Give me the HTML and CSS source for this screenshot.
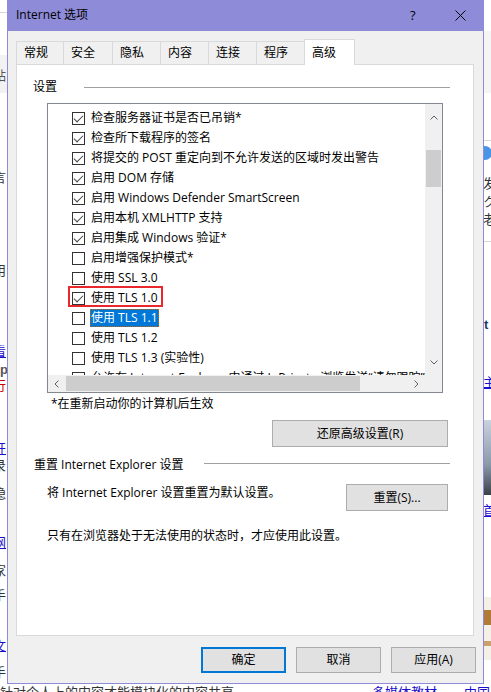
FILE: index.html
```html
<!DOCTYPE html>
<html lang="zh-CN">
<head>
<meta charset="utf-8">
<title>Internet 选项</title>
<link rel="stylesheet" href="styles.css">
</head>
<body>
<div class="backdrop">
  <div class="bg-line bl-top"></div>
  <div class="bg-box lbox"><span class="frag-in">贴</span></div>
  <span class="frag gray f-yan">言</span>
  <span class="frag gray f-yong">用</span>
  <span class="frag link f-kan">看</span>
  <span class="frag bold f-p">p</span>
  <span class="frag red f-xing">行</span>
  <span class="frag link f-kai">开</span>
  <span class="frag gray f-lu">录</span>
  <span class="frag gray f-yin">隐</span>
  <span class="frag link f-wang">网</span>
  <span class="frag gray f-jia">家</span>
  <span class="frag gray f-shou">手</span>
  <span class="frag link f-wen">文</span>
  <span class="frag gray f-shou2">手</span>
  <span class="frag gray f-bottom">针对个人上的内容才能模块化的内容共享</span>
  <span class="frag link f-media">多媒体教材</span>
  <span class="frag link f-china">中国</span>
  <div class="bg-box rbox"></div>
  <div class="bg-line bl-r1"></div>
  <div class="bg-line bl-r2"></div>
  <div class="dot"></div>
  <span class="frag gray f-fa">发</span>
  <span class="frag gray f-ku">ク</span>
  <span class="frag gray f-lao">老</span>
  <span class="frag navy f-t">t</span>
  <span class="frag link f-zhu">主</span>
  <div class="photo"></div>
  <span class="frag link f-shouye">首</span>
  <div class="logo"></div>
</div>

<div class="dialog">
  <div class="titlebar">
    <span class="title">Internet 选项</span>
    <span class="help">?</span>
    <span class="close"><svg width="11" height="11" viewBox="0 0 11 11"><path d="M0.5 0.5 L10.5 10.5 M10.5 0.5 L0.5 10.5" stroke="#000" stroke-width="1" fill="none"/></svg></span>
  </div>

  <div class="tabs">
    <div class="tab w1">常规</div>
    <div class="tab w2">安全</div>
    <div class="tab w3">隐私</div>
    <div class="tab w3">内容</div>
    <div class="tab w3">连接</div>
    <div class="tab w3">程序</div>
    <div class="tab active">高级</div>
  </div>

  <div class="panel">
    <div class="legend"><span>设置</span><span class="rule"></span></div>

    <div class="listbox">
      <div class="items">
        <div class="row"><span class="cb on"></span><span class="lbl">检查服务器证书是否已吊销*</span></div>
        <div class="row"><span class="cb on"></span><span class="lbl">检查所下载程序的签名</span></div>
        <div class="row"><span class="cb on"></span><span class="lbl">将提交的 POST 重定向到不允许发送的区域时发出警告</span></div>
        <div class="row"><span class="cb on"></span><span class="lbl">启用 DOM 存储</span></div>
        <div class="row"><span class="cb on"></span><span class="lbl">启用 Windows Defender SmartScreen</span></div>
        <div class="row"><span class="cb on"></span><span class="lbl">启用本机 XMLHTTP 支持</span></div>
        <div class="row"><span class="cb on"></span><span class="lbl">启用集成 Windows 验证*</span></div>
        <div class="row"><span class="cb"></span><span class="lbl">启用增强保护模式*</span></div>
        <div class="row"><span class="cb"></span><span class="lbl">使用 SSL 3.0</span></div>
        <div class="row"><span class="mark"><span class="cb on"></span><span class="lbl">使用 TLS 1.0</span></span></div>
        <div class="row"><span class="cb"></span><span class="lbl sel">使用 TLS 1.1</span></div>
        <div class="row"><span class="cb"></span><span class="lbl">使用 TLS 1.2</span></div>
        <div class="row"><span class="cb"></span><span class="lbl">使用 TLS 1.3 (实验性)</span></div>
        <div class="row"><span class="cb"></span><span class="lbl">允许在 Internet Explorer 中通过 InPrivate 浏览发送“请勿跟踪”请求*</span></div>
      </div>
      <div class="vscroll">
        <div class="sb-up"><svg width="8" height="5" viewBox="0 0 8 5"><path d="M0.5 4.5 L4 1 L7.5 4.5" stroke="#606060" fill="none"/></svg></div>
        <div class="vthumb"></div>
        <div class="sb-fill"></div>
        <div class="sb-down"><svg width="8" height="5" viewBox="0 0 8 5"><path d="M0.5 0.5 L4 4 L7.5 0.5" stroke="#606060" fill="none"/></svg></div>
      </div>
      <div class="hscroll">
        <div class="sb-side"><svg width="5" height="8" viewBox="0 0 5 8"><path d="M4.5 0.5 L1 4 L4.5 7.5" stroke="#606060" fill="none"/></svg></div>
        <div class="hthumb"></div>
        <div class="sb-fill"></div>
        <div class="sb-side"><svg width="5" height="8" viewBox="0 0 5 8"><path d="M0.5 0.5 L4 4 L0.5 7.5" stroke="#606060" fill="none"/></svg></div>
      </div>
      <div class="corner"></div>
    </div>

    <div class="note">*在重新启动你的计算机后生效</div>

    <div class="btn-row"><div class="btn restore">还原高级设置(R)</div></div>

    <div class="legend section"><span>重置 Internet Explorer 设置</span><span class="rule"></span></div>

    <div class="reset-row">
      <span class="desc">将 Internet Explorer 设置重置为默认设置。</span>
      <div class="btn reset">重置(S)...</div>
    </div>

    <div class="desc warn">只有在浏览器处于无法使用的状态时，才应使用此设置。</div>
  </div>

  <div class="footer">
    <div class="btn foot primary">确定</div>
    <div class="btn foot">取消</div>
    <div class="btn foot">应用(A)</div>
  </div>
</div>
</body>
</html>
```

FILE: styles.css
```css
* { box-sizing: border-box; margin: 0; padding: 0; }

html, body { width: 491px; height: 692px; overflow: hidden; }

body {
  position: relative;
  background: #fff;
  font-family: "Open Sans", "Noto Sans CJK SC", sans-serif;
  font-size: 12px;
  color: #000;
}

/* ---------- page behind the dialog ---------- */
.backdrop { position: absolute; inset: 0; overflow: hidden; }
.frag { position: absolute; font-size: 13px; line-height: 14px; white-space: nowrap; font-family: "Noto Sans CJK SC", sans-serif; }
.gray { color: #333; }
.link { color: #1a0dcc; text-decoration: underline; }
.red { color: #c00; }
.bold { color: #555; font-weight: bold; font-family: "Liberation Sans", sans-serif; }
.navy { color: #1b3a6b; font-weight: bold; font-family: "Liberation Sans", sans-serif; }
.bg-line { position: absolute; height: 1px; background: #d6d6d6; }
.bl-top { left: 0; top: 12px; width: 8px; }
.bg-box { position: absolute; }
.lbox { left: 0; top: 55px; width: 8px; height: 38px; background: #f2f2f2; }
.frag-in { position: absolute; left: -7px; top: 10px; font-size: 13px; color: #555; font-family: "Noto Sans CJK SC", sans-serif; }
.f-yan { left: -7px; top: 170px; }
.f-yong { left: -7px; top: 263px; }
.f-kan { left: -7px; top: 344px; }
.f-p { left: 0; top: 363px; }
.f-xing { left: -7px; top: 378px; }
.f-kai { left: -7px; top: 441px; }
.f-lu { left: -7px; top: 458px; }
.f-yin { left: -7px; top: 486px; }
.f-wang { left: -7px; top: 535px; }
.f-jia { left: -7px; top: 563px; }
.f-shou { left: -7px; top: 588px; }
.f-wen { left: -7px; top: 638px; }
.f-shou2 { left: -7px; top: 665px; }
.f-bottom { left: 0; top: 685px; }
.f-media { left: 372px; top: 685px; }
.f-china { left: 464px; top: 685px; }
.rbox { left: 483px; top: 31px; width: 8px; height: 62px; background: #f5f5f5; }
.bl-r1 { left: 483px; top: 140px; width: 8px; }
.bl-r2 { left: 483px; top: 241px; width: 8px; }
.dot { position: absolute; left: 478px; top: 146px; width: 14px; height: 14px; border-radius: 50%; background: #4a94e6; }
.f-fa { left: 483px; top: 176px; }
.f-ku { left: 483px; top: 194px; }
.f-lao { left: 483px; top: 212px; }
.f-t { left: 484px; top: 318px; }
.f-zhu { left: 483px; top: 375px; }
.photo { position: absolute; left: 483px; top: 420px; width: 8px; height: 75px; background: linear-gradient(#c9d3de, #8a98a8 60%, #3b4048); }
.f-shouye { left: 483px; top: 503px; }
.logo { position: absolute; left: 483px; top: 597px; width: 8px; height: 63px; background: linear-gradient(#f4efe7 0 20%, #b07a3a 20% 45%, #f4efe7 45% 70%, #c9a070 70% 78%, #f4efe7 78%); }

/* ---------- dialog window ---------- */
.dialog {
  position: absolute;
  left: 7px;
  top: 0;
  width: 477px;
  height: 684px;
  background: #f0f0f0;
  border: 1px solid #8e8cd8;
  border-top: none;
}

.titlebar {
  height: 31px;
  margin: 0 -1px;
  background: #8e8cd8;
  display: flex;
  align-items: center;
  padding-left: 9px;
}
.title { line-height: 16px; font-size: 12px; margin-top: -1px; }
.help { margin-left: auto; width: 10px; font-size: 13px; line-height: 16px; margin-top: -1px; }
.close { display: flex; margin-left: 35px; margin-right: 18px; }

/* ---------- tabs ---------- */
.tabs {
  display: flex;
  align-items: flex-end;
  height: 25px;
  margin-top: 8px;
  padding-left: 8px;
  position: relative;
  z-index: 1;
}
.tab {
  height: 23px;
  border: 1px solid #d9d9d9;
  border-bottom: none;
  margin-right: -1px;
  padding: 3px 0 0 7px;
  line-height: 16px;
  background: #f0f0f0;
}
.w1 { width: 48px; }
.w2 { width: 50px; }
.w3 { width: 49px; }
.tab.active {
  width: 51px;
  height: 26px;
  margin-bottom: -1px;
  padding-top: 5px;
  background: #fff;
  position: relative;
  z-index: 2;
}

/* ---------- tab page ---------- */
.panel {
  margin-left: 8px;
  width: 458px;
  height: 572px;
  background: #fff;
  border: 1px solid #d9d9d9;
  padding: 13px 23px 0 16px;
}

.legend { display: flex; align-items: center; height: 18px; line-height: 18px; }
.rule { flex: 1; height: 1px; background: #a0a0a0; margin-left: 27px; }
.legend.section { margin-top: 9px; padding-left: 1px; }
.legend.section .rule { margin-left: 21px; margin-bottom: 4px; }

.listbox {
  margin: 7px 0 0 14px;
  width: 396px;
  height: 290px;
  border: 1px solid #828790;
  background: #fff;
  display: grid;
  grid-template-columns: 1fr 17px;
  grid-template-rows: 1fr 17px;
}
.items { overflow: hidden; padding-top: 4px; }
.row {
  height: 20px;
  display: flex;
  align-items: center;
  padding-left: 24px;
  white-space: nowrap;
}
.cb {
  flex: none;
  width: 13px;
  height: 13px;
  border: 1px solid #333;
  background: #fff;
  margin-right: 5px;
  position: relative;
}
.cb.on::after {
  content: "";
  position: absolute;
  left: 3px;
  top: 0;
  width: 4px;
  height: 8px;
  border: solid #444;
  border-width: 0 1px 1px 0;
  transform: rotate(45deg);
}
.lbl { line-height: 18px; padding: 0 1px; }
.sel { background: #0078d7; color: #fff; outline: 1px dotted #c86400; outline-offset: -1px; }
.mark { position: relative; display: flex; align-items: center; }
.mark::after {
  content: "";
  position: absolute;
  left: -4px;
  right: -4px;
  top: -3px;
  bottom: 0;
  border: 2px solid #e8282c;
}

.vscroll { background: #f0f0f0; display: flex; flex-direction: column; align-items: center; }
.sb-up { height: 46px; width: 100%; display: flex; justify-content: center; padding-top: 11px; }
.vthumb { width: 15px; height: 37px; background: #cdcdcd; flex: none; }
.sb-fill { flex: 1; }
.sb-down { height: 22px; width: 100%; display: flex; justify-content: center; padding-top: 7px; }

.hscroll { background: #f0f0f0; display: flex; align-items: center; }
.sb-side { width: 17px; height: 17px; display: flex; align-items: center; justify-content: center; flex: none; }
.hthumb { width: 294px; height: 15px; margin-left: 1px; background: #cdcdcd; flex: none; }
.corner { background: #f0f0f0; }

.note { margin-left: 18px; line-height: 22px; height: 22px; }

.btn {
  height: 27px;
  border: 1px solid #adadad;
  background: #e1e1e1;
  display: flex;
  align-items: center;
  justify-content: center;
  line-height: 16px;
}
.btn-row { display: flex; justify-content: flex-end; padding-right: 2px; margin-top: 5px; }
.restore { width: 176px; }

.reset-row { display: flex; align-items: flex-start; margin-top: 10px; padding-right: 2px; }
.desc { margin-left: 14px; line-height: 18px; display: block; }
.reset { width: 102px; margin-left: auto; }
.warn { margin-top: 16px; }

/* ---------- footer buttons ---------- */
.footer {
  display: flex;
  justify-content: flex-end;
  gap: 10px;
  margin-top: 11px;
  padding-right: 7px;
}
.btn.foot { width: 85px; height: 26px; }
.btn.primary { border: 2px solid #0078d7; }
```
